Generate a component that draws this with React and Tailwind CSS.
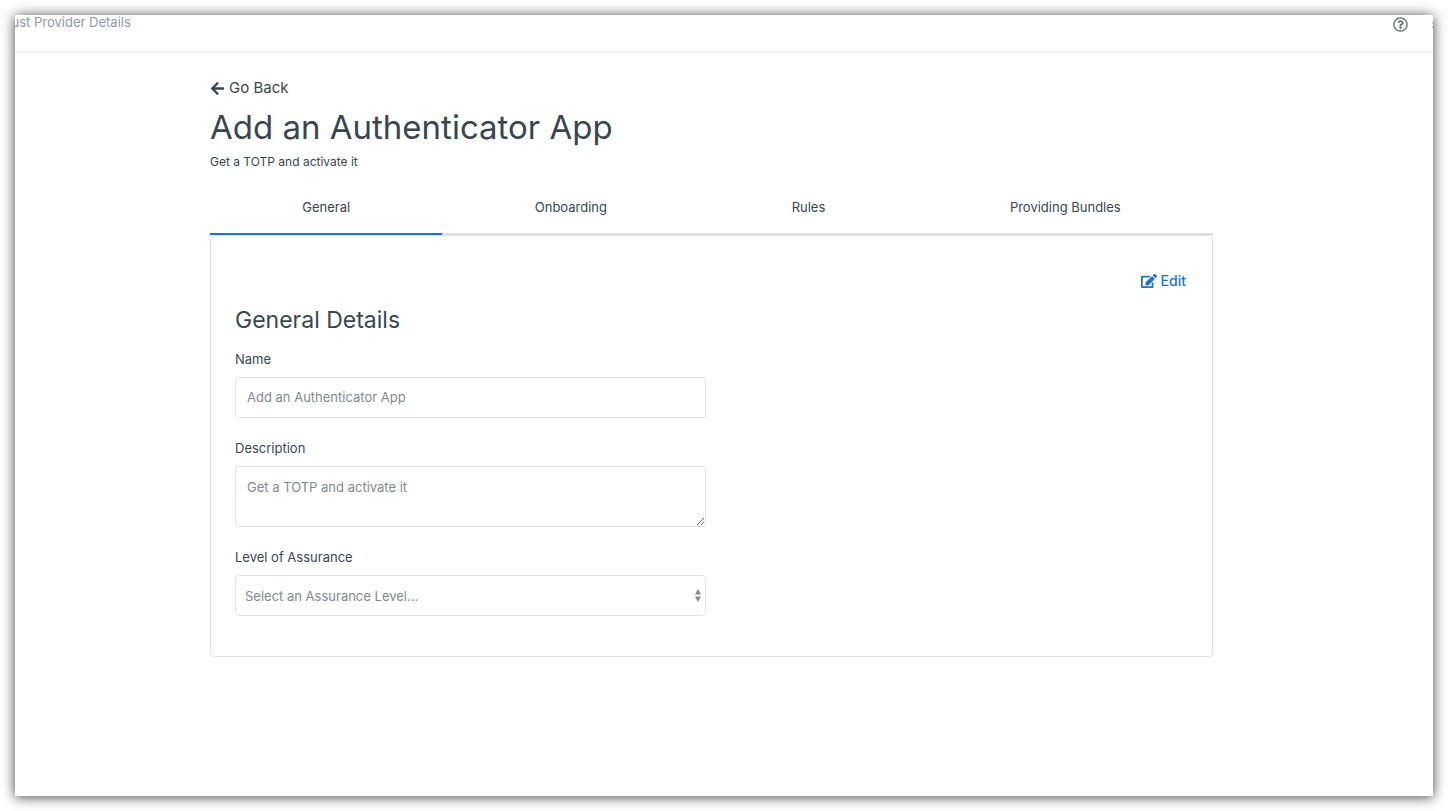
import { useState } from "react";
import { FaArrowLeft, FaEdit, FaRegQuestionCircle } from "react-icons/fa";

const TABS = ["General", "Onboarding", "Rules", "Providing Bundles"];

function Header() {
  return (
    <header className="flex h-[38px] items-start justify-between overflow-hidden border-b-2 border-[#f3f4f5] text-[#8c99a6]">
      <span className="-ml-4 text-[13px] leading-[14px] whitespace-nowrap">Trust Provider Details</span>
      <div className="flex items-start gap-6">
        <button type="button" aria-label="Help" className="pt-0.5 text-[#66727e]">
          <FaRegQuestionCircle className="size-[15px]" />
        </button>
        <svg viewBox="0 0 1 14" className="h-[14px] w-px fill-[#c3c9ce]" aria-hidden="true">
          <path d="M0 7h1v2H0zM0 11h1v2H0z" />
        </svg>
      </div>
    </header>
  );
}

function Tabs({ active, onSelect }) {
  return (
    <nav role="tablist" className="flex">
      {TABS.map((tab) => (
        <button
          key={tab}
          type="button"
          role="tab"
          aria-selected={tab === active}
          onClick={() => onSelect(tab)}
          className={
            tab === active
              ? "h-[41px] flex-auto border-b-2 border-[#1873d3] pb-3 text-[13px] leading-5"
              : "h-[41px] flex-auto border-b-2 border-[#dce0e3] pb-3 text-[13px] leading-5"
          }
        >
          {tab}
        </button>
      ))}
    </nav>
  );
}

function Field({ id, label, children }) {
  return (
    <div className="flex flex-col gap-2">
      <label htmlFor={id} className="text-[13px] leading-5">
        {label}
      </label>
      {children}
    </div>
  );
}

export default function App() {
  const [active, setActive] = useState("General");
  return (
    <div className="flex min-h-screen bg-white p-[15px] font-['Inter','Liberation_Sans',sans-serif] text-[#37474f]">
      <div className="min-w-0 flex-1 overflow-clip bg-white shadow-[0_1px_12px_rgba(0,0,0,0.75)]">
        <Header />
        <main className="pr-[25px]">
          <div className="mx-auto w-full max-w-[1003px] pt-[23px]">
            <a href="#back" className="inline-flex items-center gap-1 text-[15px] leading-6">
              <FaArrowLeft className="size-[15px]" />
              Go Back
            </a>
            <h1 className="text-[33px] leading-[50px]">Add an Authenticator App</h1>
            <p className="text-[12px] leading-5">Get a TOTP and activate it</p>
            <div className="pt-[22px]">
              <Tabs active={active} onSelect={setActive} />
            </div>
            <section className="rounded-[4px] border border-[#dfe2e5] px-6 pt-[35px] pb-10">
              <div className="flex justify-end pr-0.5">
                <button type="button" className="flex items-center gap-1 text-[14px] leading-5 font-medium text-[#1873d3]">
                  <FaEdit className="size-4" />
                  Edit
                </button>
              </div>
              <h2 className="pt-[11px] text-[23px] leading-9">General Details</h2>
              <form className="flex max-w-[471px] flex-col gap-5 pt-[11px]">
                <Field id="name" label="Name">
                  <input
                    id="name"
                    type="text"
                    readOnly
                    defaultValue="Add an Authenticator App"
                    className="h-[41px] rounded-[3px] border border-[#e2e5e8] px-[11px] text-[13px] text-[#818a92]"
                  />
                </Field>
                <Field id="description" label="Description">
                  <textarea
                    id="description"
                    readOnly
                    defaultValue="Get a TOTP and activate it"
                    className="h-[61px] resize rounded-[3px] border border-[#e2e5e8] px-[11px] py-[10px] text-[13px] leading-5 text-[#818a92]"
                  />
                </Field>
                <Field id="assurance" label="Level of Assurance">
                  <div className="relative flex">
                    <select
                      id="assurance"
                      className="h-[41px] w-full appearance-none rounded-[4px] border border-[#e2e5e8] bg-white px-[9px] pt-[3px] text-[13px] text-[#818a92]"
                    >
                      <option>Select an Assurance Level...</option>
                    </select>
                    <svg viewBox="0 0 6 13" className="pointer-events-none absolute top-[14px] right-[5px] h-[13px] w-[6px] fill-[#818a92]" aria-hidden="true">
                      <path d="M3 0 6 5.5H0zM0 7.5h6L3 13z" />
                    </svg>
                  </div>
                </Field>
              </form>
            </section>
          </div>
        </main>
      </div>
    </div>
  );
}
